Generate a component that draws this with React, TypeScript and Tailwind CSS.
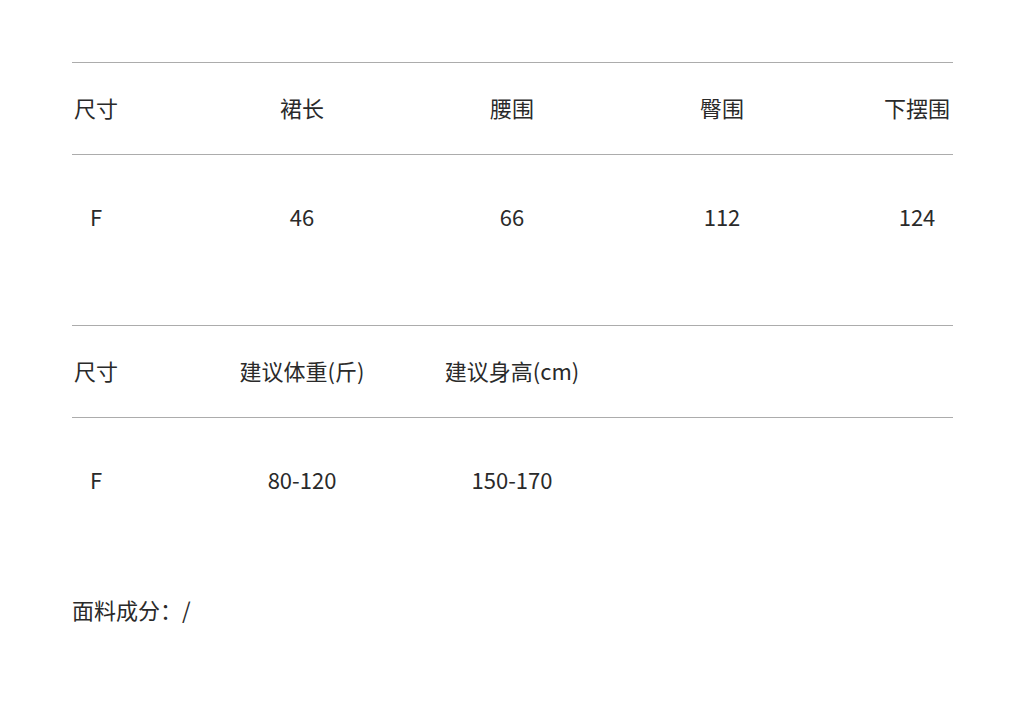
const font = { fontFamily: '"Noto Sans CJK SC", "Noto Sans", sans-serif' };

const cols = 'grid grid-cols-[125px_210px_210px_264px_72px] items-center';

function Cells({ items }: { items: string[] }) {
  return (
    <>
      <div><div className="w-12 text-center whitespace-nowrap">{items[0]}</div></div>
      <div className="text-center whitespace-nowrap">{items[1] ?? ''}</div>
      <div className="text-center whitespace-nowrap">{items[2] ?? ''}</div>
      <div><div className="w-[210px] text-center whitespace-nowrap">{items[3] ?? ''}</div></div>
      <div className="text-center whitespace-nowrap">{items[4] ?? ''}</div>
    </>
  );
}

function Table({ head, row }: { head: string[]; row: string[] }) {
  return (
    <div>
      <div className="border-t-[1.5px] border-[#acacac]" />
      <div className={`${cols} h-[91px] pb-[3px]`}><Cells items={head} /></div>
      <div className="border-t-[1.5px] border-[#acacac]" />
      <div className={`${cols} h-[170px] content-start pt-[45px]`}><Cells items={row} /></div>
    </div>
  );
}

export default function App() {
  return (
    <div className="w-[1024px] h-[712px] bg-white text-[#2a2a2a] text-[22px] leading-[32px]" style={font}>
      <div className="pl-[72px] w-[953px] pt-[62px]">
        <Table head={['尺寸', '裙长', '腰围', '臀围', '下摆围']} row={['F', '46', '66', '112', '124']} />
        <Table head={['尺寸', '建议体重(斤)', '建议身高(cm)']} row={['F', '80-120', '150-170']} />
        <div className="mt-[5px]">面料成分：/</div>
      </div>
    </div>
  );
}
